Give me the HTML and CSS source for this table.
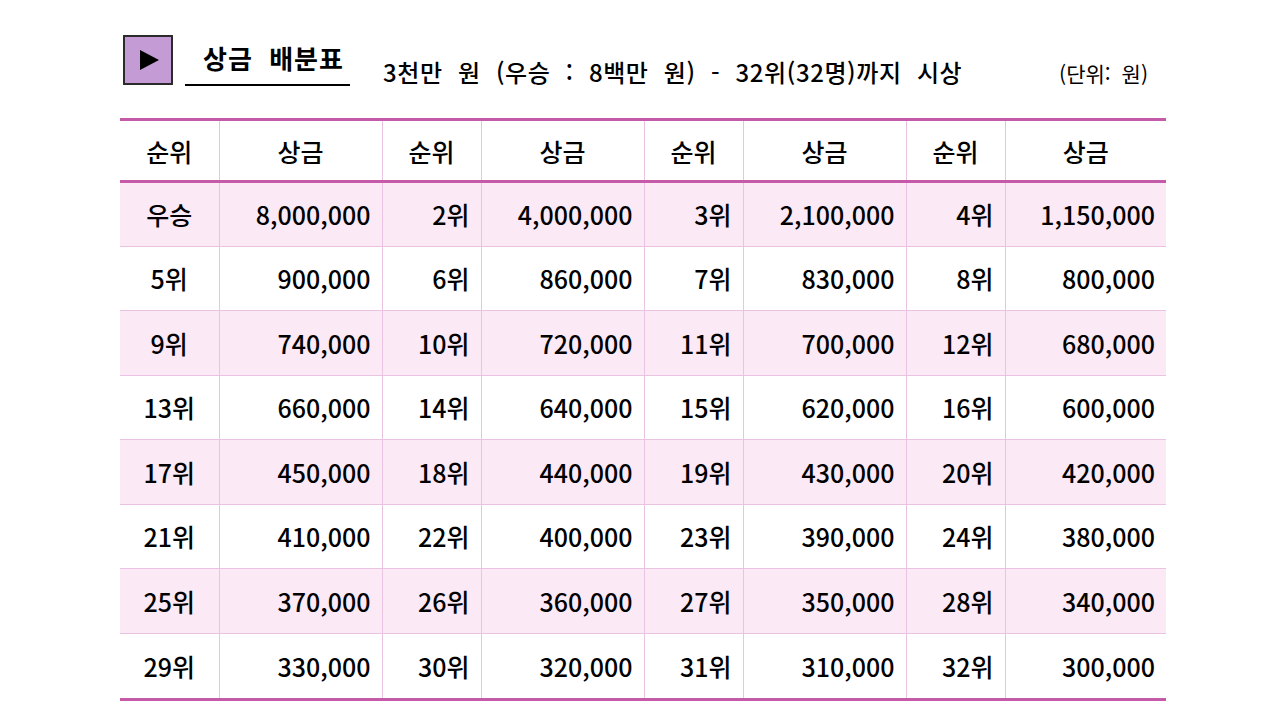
FILE: index.html
```html
<!DOCTYPE html>
<html lang="ko">
<head>
<meta charset="utf-8">
<link rel="stylesheet" href="styles.css">
</head>
<body>
<div class="page">
  <div class="head">
    <div class="play"><span class="tri"></span></div>
    <div class="title">상금 배분표</div>
    <div class="sub">3천만 원 (우승 : 8백만 원) - 32위(32명)까지 시상</div>
    <div class="unit">(단위: 원)</div>
  </div>
  <table class="prize">
    <colgroup>
      <col class="c-rank"><col class="c-amt"><col class="c-rank"><col class="c-amt"><col class="c-rank"><col class="c-amt"><col class="c-rank"><col class="c-amt-last">
    </colgroup>
    <thead>
      <tr><th>순위</th><th>상금</th><th>순위</th><th>상금</th><th>순위</th><th>상금</th><th>순위</th><th>상금</th></tr>
    </thead>
    <tbody>
      <tr class="odd"><td class="first">우승</td><td>8,000,000</td><td>2위</td><td>4,000,000</td><td>3위</td><td>2,100,000</td><td>4위</td><td>1,150,000</td></tr>
      <tr><td class="first">5위</td><td>900,000</td><td>6위</td><td>860,000</td><td>7위</td><td>830,000</td><td>8위</td><td>800,000</td></tr>
      <tr class="odd"><td class="first">9위</td><td>740,000</td><td>10위</td><td>720,000</td><td>11위</td><td>700,000</td><td>12위</td><td>680,000</td></tr>
      <tr><td class="first">13위</td><td>660,000</td><td>14위</td><td>640,000</td><td>15위</td><td>620,000</td><td>16위</td><td>600,000</td></tr>
      <tr class="odd"><td class="first">17위</td><td>450,000</td><td>18위</td><td>440,000</td><td>19위</td><td>430,000</td><td>20위</td><td>420,000</td></tr>
      <tr><td class="first">21위</td><td>410,000</td><td>22위</td><td>400,000</td><td>23위</td><td>390,000</td><td>24위</td><td>380,000</td></tr>
      <tr class="odd"><td class="first">25위</td><td>370,000</td><td>26위</td><td>360,000</td><td>27위</td><td>350,000</td><td>28위</td><td>340,000</td></tr>
      <tr class="last"><td class="first">29위</td><td>330,000</td><td>30위</td><td>320,000</td><td>31위</td><td>310,000</td><td>32위</td><td>300,000</td></tr>
    </tbody>
  </table>
</div>
</body>
</html>
```
FILE: styles.css
```css
* { box-sizing: border-box; }
html, body { margin: 0; padding: 0; background: #ffffff; }
body {
  width: 1280px;
  height: 720px;
  overflow: hidden;
  font-family: "Noto Sans CJK KR", "Noto Sans", sans-serif;
  color: #000;
}
.page {
  padding: 35px 0 0 120px;
}
.head {
  display: flex;
  align-items: flex-start;
  height: 50px;
  width: 1046px;
}
.play {
  width: 50px;
  height: 50px;
  margin-left: 3px;
  background: #c49bd4;
  border: 2px solid #2b2b2b;
  display: flex;
  align-items: center;
  justify-content: center;
}
.tri {
  width: 0;
  height: 0;
  border-top: 10px solid transparent;
  border-bottom: 10px solid transparent;
  border-left: 19px solid #000;
  margin-left: 2px;
}
.title {
  margin-left: 12px;
  width: 165px;
  height: 51px;
  padding-left: 12px;
  border-bottom: 2px solid #000;
  text-align: center;
  font-size: 26px;
  font-weight: 700;
  line-height: 46px;
  letter-spacing: 1px;
  word-spacing: 8px;
}
.sub {
  margin-left: 33px;
  font-size: 24px;
  font-weight: 500;
  line-height: 30px;
  padding-top: 22px;
  letter-spacing: 0.6px;
  word-spacing: 8px;
}
.unit {
  margin-left: auto;
  margin-right: 18px;
  font-size: 21px;
  line-height: 28px;
  padding-top: 24px;
  word-spacing: 5px;
}
.prize {
  margin-top: 33px;
  width: 1046px;
  border-collapse: collapse;
  table-layout: fixed;
  font-size: 25px;
  font-weight: 500;
}
.c-rank { width: 99px; }
.c-amt { width: 163px; }
.c-amt-last { width: 161px; }
.prize thead tr { border-top: 3px solid #c55aa8; border-bottom: 3px solid #c55aa8; }
.prize tbody tr.last { border-bottom: 3px solid #c55aa8; }
.prize th {
  height: 62px;
  font-weight: 500;
  text-align: center;
  border-left: 1px solid #ebc3e2;
  padding: 0;
}
.prize td {
  height: 64.5px;
  text-align: right;
  padding: 0 11px 0 0;
  border-left: 1px solid #ebc3e2;
  border-top: 1px solid #ebc3e2;
}
.prize tr.last td { height: 66px; }
.prize th:first-child, .prize td:first-child { border-left: none; }
.prize td.first { text-align: center; padding: 0; }
.prize tr.odd td { background: #fbe9f5; }
.prize thead + tbody tr:first-child td { border-top: none; }
```
